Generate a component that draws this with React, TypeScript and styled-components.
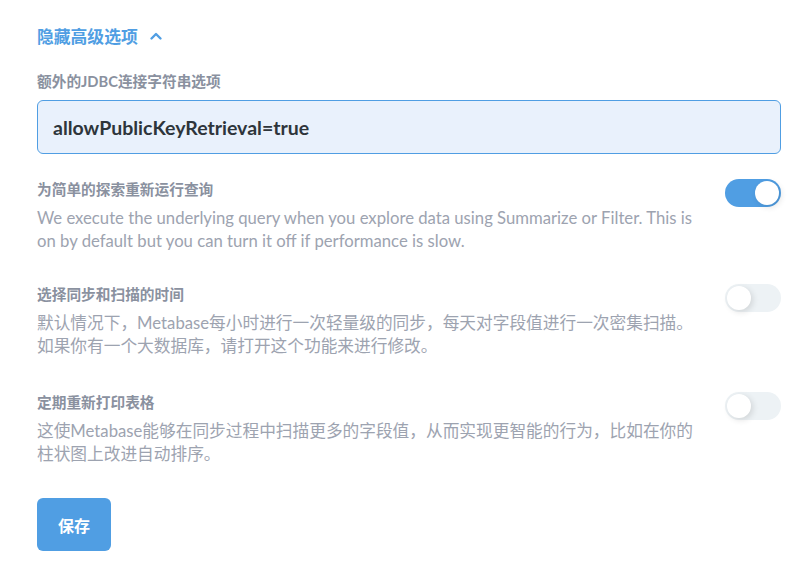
import React, { useState } from 'react'
import styled, { createGlobalStyle } from 'styled-components'

const GlobalStyle = createGlobalStyle`
  html, body {
    margin: 0;
    padding: 0;
    background: #fff;
  }
  body {
    font-family: Lato, "Noto Sans CJK SC", sans-serif;
    -webkit-font-smoothing: antialiased;
  }
`

const Page = styled.div`
  padding: 24px 22px 0 37px;
  display: flex;
  flex-direction: column;
`

const Toggler = styled.button`
  display: flex;
  align-items: center;
  gap: 11px;
  padding: 0;
  border: none;
  background: none;
  color: #509ee3;
  font-family: inherit;
  font-size: 16.8px;
  font-weight: 700;
  cursor: pointer;
  height: 24px;
`

const FieldLabel = styled.div`
  margin-top: 24px;
  color: #8a919f;
  font-size: 14.7px;
  font-weight: 700;
  line-height: 18px;
`

const TextInput = styled.input`
  margin-top: 10px;
  box-sizing: border-box;
  width: 744px;
  height: 54px;
  padding: 0 15px;
  border: 1px solid #509ee3;
  border-radius: 6px;
  background: #e9f1fc;
  color: #2e353b;
  font-family: inherit;
  font-size: 19.5px;
  font-weight: 700;
  outline: none;
`

const SettingRow = styled.div<{ $gap: number }>`
  display: flex;
  justify-content: space-between;
  width: 744px;
  margin-top: ${(p) => p.$gap}px;
`

const SettingText = styled.div`
  width: 665px;
`

const SettingTitle = styled.div`
  color: #8a919f;
  font-size: 14.7px;
  font-weight: 700;
  line-height: 18px;
`

const SettingDesc = styled.div`
  margin-top: 9px;
  color: #9da3b0;
  font-size: 16.7px;
  line-height: 23px;
`

const Switch = styled.div<{ $on: boolean }>`
  position: relative;
  flex: none;
  width: 56px;
  height: 28px;
  margin-top: -1px;
  border-radius: 14px;
  background: ${(p) => (p.$on ? '#509ee3' : '#edf2f5')};
  cursor: pointer;
  &::after {
    content: '';
    position: absolute;
    top: 2px;
    left: ${(p) => (p.$on ? '30px' : '2px')};
    width: 24px;
    height: 24px;
    border-radius: 50%;
    background: #fff;
    box-shadow: 2px 2px 6px rgba(0, 0, 0, 0.12);
  }
`

const SaveButton = styled.button`
  margin-top: 32px;
  width: 74px;
  height: 53px;
  border: none;
  border-radius: 6px;
  background: #509ee3;
  color: #fff;
  font-family: inherit;
  font-size: 16px;
  font-weight: 700;
`

const settings = [
  {
    title: '为简单的探索重新运行查询',
    desc: 'We execute the underlying query when you explore data using Summarize or Filter. This is on by default but you can turn it off if performance is slow.',
    on: true,
    gap: 26,
  },
  {
    title: '选择同步和扫描的时间',
    desc: '默认情况下，Metabase每小时进行一次轻量级的同步，每天对字段值进行一次密集扫描。如果你有一个大数据库，请打开这个功能来进行修改。',
    on: false,
    gap: 32,
  },
  {
    title: '定期重新打印表格',
    desc: '这使Metabase能够在同步过程中扫描更多的字段值，从而实现更智能的行为，比如在你的柱状图上改进自动排序。',
    on: false,
    gap: 35,
  },
]

export default function App() {
  const [flags, setFlags] = useState(settings.map((s) => s.on))
  return (
    <Page>
      <GlobalStyle />
      <Toggler>
        隐藏高级选项
        <svg width="14" height="14" viewBox="0 0 14 14">
          <path d="M2.5 9.5 L7 5 L11.5 9.5" fill="none" stroke="#509ee3" strokeWidth="2.4" strokeLinecap="round" strokeLinejoin="round" />
        </svg>
      </Toggler>
      <FieldLabel>额外的JDBC连接字符串选项</FieldLabel>
      <TextInput defaultValue="allowPublicKeyRetrieval=true" />
      {settings.map((s, i) => (
        <SettingRow key={s.title} $gap={s.gap}>
          <SettingText>
            <SettingTitle>{s.title}</SettingTitle>
            <SettingDesc>{s.desc}</SettingDesc>
          </SettingText>
          <Switch
            $on={flags[i]}
            onClick={() => setFlags(flags.map((f, j) => (j === i ? !f : f)))}
          />
        </SettingRow>
      ))}
      <div>
        <SaveButton>保存</SaveButton>
      </div>
    </Page>
  )
}
